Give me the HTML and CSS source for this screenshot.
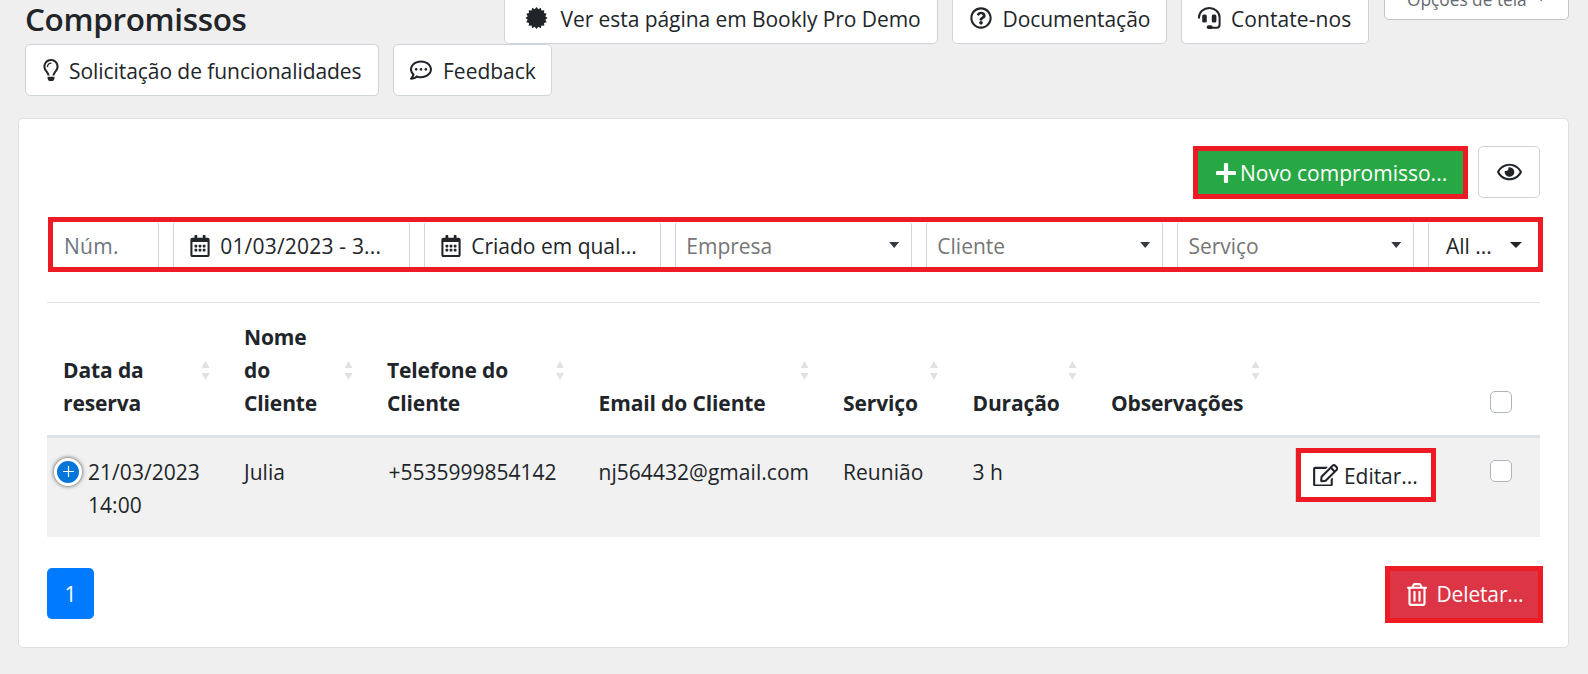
FILE: index.html
```html
<!DOCTYPE html>
<html lang="pt-BR">
<head>
<meta charset="utf-8">
<title>Compromissos</title>
<link rel="stylesheet" href="styles.css">
</head>
<body>
<svg class="sprite" aria-hidden="true">
  <symbol id="calendar" viewBox="0 0 448 512"><path d="M148 288h-40c-6.6 0-12-5.4-12-12v-40c0-6.600 5.400-12 12-12h40c6.600 0 12 5.400 12 12v40c0 6.600-5.400 12-12 12zm108-12v-40c0-6.600-5.400-12-12-12h-40c-6.600 0-12 5.400-12 12v40c0 6.600 5.400 12 12 12h40c6.600 0 12-5.400 12-12zm96 0v-40c0-6.600-5.400-12-12-12h-40c-6.600 0-12 5.400-12 12v40c0 6.600 5.400 12 12 12h40c6.600 0 12-5.400 12-12zm-96 96v-40c0-6.600-5.400-12-12-12h-40c-6.600 0-12 5.400-12 12v40c0 6.600 5.400 12 12 12h40c6.600 0 12-5.400 12-12zm-96 0v-40c0-6.600-5.400-12-12-12h-40c-6.600 0-12 5.400-12 12v40c0 6.600 5.400 12 12 12h40c6.600 0 12-5.400 12-12zm192 0v-40c0-6.600-5.400-12-12-12h-40c-6.600 0-12 5.400-12 12v40c0 6.600 5.400 12 12 12h40c6.600 0 12-5.400 12-12zm96-260v352c0 26.500-21.500 48-48 48H48c-26.500 0-48-21.500-48-48V112c0-26.500 21.500-48 48-48h48V12c0-6.600 5.400-12 12-12h40c6.600 0 12 5.400 12 12v52h128V12c0-6.600 5.400-12 12-12h40c6.600 0 12 5.400 12 12v52h48c26.500 0 48 21.500 48 48zm-48 346V160H48v298c0 3.300 2.700 6 6 6h340c3.300 0 6-2.700 6-6z"/></symbol>
</svg>

<header class="header">
  <div class="header-row header-top">
    <h1 class="title">Compromissos</h1>
    <a class="btn btn-demo"><svg class="icon" width="23" height="22" viewBox="0 0 22 22"><path d="M22 11L19.800 12.800 21.200 15.200 18.500 16 18.800 18.800 16 18.500 15.200 21.200 12.800 19.800 11 22 9.200 19.800 6.800 21.200 6 18.500 3.200 18.800 3.500 16 .8 15.200 2.200 12.800 0 11 2.200 9.200 .8 6.800 3.500 6 3.200 3.200 6 3.500 6.800 .8 9.200 2.200 11 0 12.800 2.200 15.200 .8 16 3.500 18.800 3.200 18.500 6 21.200 6.800 19.800 9.200z"/></svg><span>Ver esta página em Bookly Pro Demo</span></a>
    <a class="btn btn-docs"><svg class="icon" width="22" height="22" viewBox="0 0 512 512"><path d="M256 8C119.043 8 8 119.083 8 256c0 136.997 111.043 248 248 248s248-111.003 248-248C504 119.083 392.957 8 256 8zm0 448c-110.532 0-200-89.431-200-200 0-110.495 89.472-200 200-200 110.491 0 200 89.471 200 200 0 110.530-89.431 200-200 200zm107.244-255.200c0 67.052-72.421 68.084-72.421 92.863V300c0 6.627-5.373 12-12 12h-45.647c-6.627 0-12-5.373-12-12v-8.659c0-35.745 27.100-50.034 47.579-61.516 17.561-9.845 28.324-16.541 28.324-29.579 0-17.246-21.999-28.693-39.784-28.693-23.189 0-33.894 10.977-48.942 29.969-4.057 5.120-11.460 6.071-16.666 2.124l-27.824-21.098c-5.107-3.872-6.251-11.066-2.644-16.363C184.846 131.491 214.940 112 261.794 112c49.071 0 101.450 38.304 101.450 88.800zM298 368c0 23.159-18.841 42-42 42s-42-18.841-42-42 18.841-42 42-42 42 18.841 42 42z"/></svg><span>Documentação</span></a>
    <a class="btn btn-contact"><svg class="icon" width="23" height="22" viewBox="0 0 23 22"><path d="M1 11.500V10.500a10.300 9.500 0 0 1 20.600 0V17.500q0 3.200-3 3.200H12" fill="none" stroke="currentColor" stroke-width="2"/><rect x="4.200" y="7.500" width="4.600" height="8" rx="1.600"/><rect x="13.800" y="7.500" width="4.600" height="8" rx="1.600"/><rect x="8.700" y="18.300" width="6" height="3.700" rx="1.800"/></svg><span>Contate-nos</span></a>
    <button class="screen-options">Opções de tela <i class="caret caret-tiny"></i></button>
  </div>
  <div class="header-row">
    <a class="btn btn-request"><svg class="icon" width="16" height="22" viewBox="0 0 352 512"><path d="M176 80c-52.940 0-96 43.060-96 96 0 8.840 7.160 16 16 16s16-7.160 16-16c0-35.300 28.720-64 64-64 8.840 0 16-7.160 16-16s-7.160-16-16-16zM96.060 459.170c0 3.150.93 6.220 2.680 8.840l24.510 36.840c2.970 4.460 7.970 7.140 13.320 7.140h78.850c5.360 0 10.360-2.680 13.320-7.140l24.510-36.840c1.740-2.620 2.670-5.700 2.680-8.840l.05-43.180H96.020l.04 43.180zM176 0C73.720 0 0 82.970 0 176c0 44.370 16.450 84.850 43.560 115.780 16.640 18.990 42.740 58.800 52.420 92.160v.06h48v-.12c-.01-4.770-.72-9.510-2.150-14.070-5.590-17.810-22.820-64.770-62.170-109.670-20.540-23.430-31.520-53.150-31.610-84.140-.2-73.640 59.670-128 127.950-128 70.580 0 128 57.420 128 128 0 30.970-11.240 60.850-31.650 84.140-39.110 44.610-56.420 91.470-62.100 109.460a47.507 47.507 0 0 0-2.220 14.300v.1h48v-.05c9.680-33.370 35.780-73.180 52.420-92.160C335.550 260.850 352 220.370 352 176 352 78.800 273.200 0 176 0z"/></svg><span>Solicitação de funcionalidades</span></a>
    <a class="btn btn-feedback"><svg class="icon" width="22" height="22" viewBox="0 0 512 512"><path d="M144 208c-17.700 0-32 14.300-32 32s14.300 32 32 32 32-14.300 32-32-14.300-32-32-32zm112 0c-17.700 0-32 14.300-32 32s14.300 32 32 32 32-14.300 32-32-14.300-32-32-32zm112 0c-17.700 0-32 14.300-32 32s14.300 32 32 32 32-14.300 32-32-14.300-32-32-32zM256 32C114.600 32 0 125.100 0 240c0 47.600 19.900 91.200 52.900 126.300C38 405.700 7 439.100 6.500 439.500c-6.600 7-8.400 17.200-4.600 26S14.400 480 24 480c61.500 0 110-25.700 139.100-46.300C192 442.800 223.200 448 256 448c141.400 0 256-93.100 256-208S397.400 32 256 32zm0 368c-26.700 0-53.100-4.100-78.400-12.100l-22.700-7.200-19.500 13.800c-14.300 10.100-33.900 21.400-57.500 29 7.300-12.100 14.400-25.700 19.900-40.200l10.600-28.100-20.600-21.800C69.700 314.100 48 282.200 48 240c0-88.200 93.300-160 208-160s208 71.800 208 160-93.300 160-208 160z"/></svg><span>Feedback</span></a>
  </div>
</header>

<main class="card">
  <div class="toolbar">
    <button class="btn-new"><svg class="icon" width="20" height="20" viewBox="0 0 20 20"><path d="M7.900 1.200Q7.900 0 9.100 0h1.800q1.200 0 1.200 1.200v6.700h6.700q1.200 0 1.200 1.200v1.800q0 1.200-1.200 1.200h-6.700v6.700q0 1.200-1.200 1.200H9.100q-1.200 0-1.200-1.200v-6.700H1.200Q0 12.100 0 10.900V9.100q0-1.200 1.200-1.200h6.700z"/></svg><span>Novo compromisso...</span></button>
    <button class="btn-eye"><svg class="icon" width="25" height="22" viewBox="0 0 576 512"><path d="M288 144a110.940 110.940 0 0 0-31.240 5 55.400 55.400 0 0 1 7.240 27 56 56 0 0 1-56 56 55.400 55.400 0 0 1-27-7.240A111.710 111.710 0 1 0 288 144zm284.520 97.400C518.290 135.590 410.930 64 288 64S57.680 135.640 3.480 241.410a32.350 32.350 0 0 0 0 29.190C57.710 376.410 165.070 448 288 448s230.320-71.640 284.520-177.410a32.350 32.350 0 0 0 0-29.190zM288 400c-98.650 0-189.090-55-237.930-144C98.910 167 189.340 112 288 112s189.090 55 237.930 144C477.100 345 386.660 400 288 400z"/></svg></button>
  </div>

  <div class="filters">
    <div class="filter filter-id">Núm.</div>
    <div class="filter filter-date"><svg class="icon" width="20" height="22" preserveAspectRatio="none"><use href="#calendar"/></svg><span class="date-range">01/03/2023 - 3...</span></div>
    <div class="filter filter-date"><svg class="icon" width="20" height="22"><use href="#calendar"/></svg><span>Criado em qual...</span></div>
    <div class="filter filter-select">Empresa<i class="caret"></i></div>
    <div class="filter filter-select">Cliente<i class="caret"></i></div>
    <div class="filter filter-select">Serviço<i class="caret"></i></div>
    <div class="filter filter-all">All ...<i class="caret caret-wide"></i></div>
  </div>

  <div class="table">
    <div class="row head">
      <div class="cell">Data da<br>reserva<i class="sort"></i></div>
      <div class="cell">Nome<br>do<br>Cliente<i class="sort"></i></div>
      <div class="cell">Telefone do<br>Cliente<i class="sort"></i></div>
      <div class="cell">Email do Cliente<i class="sort"></i></div>
      <div class="cell">Serviço<i class="sort"></i></div>
      <div class="cell">Duração<i class="sort"></i></div>
      <div class="cell">Observações<i class="sort"></i></div>
      <div></div>
      <div class="check-cell"><span class="checkbox"></span></div>
    </div>
    <div class="row body">
      <div class="cell date-cell"><span class="expand"><svg width="11" height="11" viewBox="0 0 11 11"><path d="M5.500 0v11M0 5.500h11" stroke="#fff" stroke-width="1.200"/></svg></span><span>21/03/2023<br>14:00</span></div>
      <div class="cell">Julia</div>
      <div class="cell phone">+5535999854142</div>
      <div class="cell">nj564432@gmail.com</div>
      <div class="cell">Reunião</div>
      <div class="cell">3 h</div>
      <div class="cell"></div>
      <div class="edit-cell"><button class="btn-edit"><svg class="icon" width="25.500" height="22.500" viewBox="0 0 576 512"><path d="M402.300 344.900l32-32c5-5 13.700-1.500 13.700 5.700V464c0 26.500-21.500 48-48 48H48c-26.500 0-48-21.500-48-48V112c0-26.500 21.500-48 48-48h273.500c7.100 0 10.700 8.600 5.700 13.700l-32 32c-1.500 1.500-3.500 2.300-5.700 2.300H48v352h352V350.500c0-2.100.8-4.100 2.300-5.600zm156.600-201.800L296.300 405.700l-90.400 10c-26.200 2.900-48.500-19.200-45.600-45.600l10-90.400L432.900 17.100c22.900-22.900 59.900-22.900 82.700 0l43.200 43.200c22.900 22.900 22.900 60 .1 82.800zM460.100 174L402 115.900 216.200 301.800l-7.300 65.300 65.300-7.300L460.100 174zm64.800-79.700l-43.200-43.200c-4.100-4.100-10.800-4.100-14.800 0L436 82l58.100 58.100 30.900-30.900c4-4.200 4-10.800-.1-14.900z"/></svg><span>Editar...</span></button></div>
      <div class="check-cell"><span class="checkbox"></span></div>
    </div>
  </div>

  <div class="footer">
    <a class="page">1</a>
    <button class="btn-delete"><svg class="icon" width="20" height="23" viewBox="0 0 448 512"><path d="M268 416h24a12 12 0 0 0 12-12V188a12 12 0 0 0-12-12h-24a12 12 0 0 0-12 12v216a12 12 0 0 0 12 12zM432 80h-82.410l-34-56.700A48 48 0 0 0 274.410 0H173.590a48 48 0 0 0-41.160 23.300L98.410 80H16A16 16 0 0 0 0 96v16a16 16 0 0 0 16 16h16v336a48 48 0 0 0 48 48h288a48 48 0 0 0 48-48V128h16a16 16 0 0 0 16-16V96a16 16 0 0 0-16-16zM171.840 50.910A6 6 0 0 1 177 48h94a6 6 0 0 1 5.150 2.910L293.610 80H154.390zM368 464H80V128h288zm-212-48h24a12 12 0 0 0 12-12V188a12 12 0 0 0-12-12h-24a12 12 0 0 0-12 12v216a12 12 0 0 0 12 12z"/></svg><span>Deletar...</span></button>
  </div>
</main>
</body>
</html>
```
FILE: styles.css
```css
* { box-sizing: border-box; }

body {
  margin: 0;
  height: 674px;
  overflow: hidden;
  background: #efefef;
  color: #212529;
  font: 21px/33px "Open Sans", "Noto Sans", sans-serif;
  white-space: nowrap;
}

button { font: inherit; color: inherit; margin: 0; }
.sprite { position: absolute; width: 0; height: 0; }
.icon { display: block; flex: none; fill: currentColor; }

/* Page header */
.header { display: flow-root; padding-left: 25px; height: 118px; }
.header-row { display: flex; align-items: flex-start; gap: 14px; }
.header-top { margin-top: -8px; }

.title {
  width: 465px;
  margin: 6px 0 0;
  font-size: 31.500px;
  line-height: 42px;
  font-weight: 600;
  letter-spacing: -.35px;
}

.btn {
  display: flex;
  align-items: center;
  height: 52px;
  border: 1px solid #ced4da;
  border-radius: 5px;
  background: #fff;
}
.btn span, .btn-edit span { padding-top: 2px; }
.btn-demo { width: 434px; padding-left: 20px; gap: 12.500px; letter-spacing: -.06px; }
.btn-docs { width: 215px; padding-left: 17px; gap: 10.500px; letter-spacing: -.05px; }
.btn-contact { width: 188px; padding-left: 16px; gap: 10px; letter-spacing: .08px; }
.btn-request { width: 354px; padding-left: 17px; gap: 10px; letter-spacing: -.06px; }
.btn-feedback { width: 159px; padding-left: 16px; gap: 11px; }

.screen-options {
  display: flex;
  align-items: center;
  gap: 11px;
  width: 185px;
  height: 42px;
  margin: -14px 0 0 1px;
  padding: 0 0 0 22px;
  border: 1px solid #c3c4c7;
  border-radius: 0 0 5px 5px;
  background: #fff;
  color: #646970;
  font-size: 17.300px;
}

.caret {
  flex: none;
  width: 10px;
  height: 6px;
  background: #343a40;
  clip-path: polygon(0 0, 100% 0, 50% 100%);
}
.caret-wide { width: 12px; background: #212529; }
.caret-tiny { width: 7px; height: 5px; background: #646970; }

/* Card */
.card {
  width: 1551px;
  height: 530px;
  margin-left: 18px;
  padding: 27px 28px 0;
  border: 1px solid #dfdfdf;
  border-radius: 5px;
  background: #fff;
}

.toolbar { display: flex; justify-content: flex-end; gap: 10px; }
.btn-new {
  display: flex;
  align-items: center;
  gap: 4px;
  width: 275px;
  height: 53px;
  padding: 0 0 0 18px;
  border: 5px solid #ed1c24;
  background: #28a745;
  color: #fff;
}
.btn-new span { padding-top: 2px; }
.btn-eye {
  display: grid;
  place-items: center;
  width: 62px;
  height: 52px;
  border: 1px solid #ced4da;
  border-radius: 5px;
  background: #fff;
}

.filters {
  display: flex;
  gap: 13.700px;
  height: 55px;
  margin: 18px -3px 0 1px;
  border: 5px solid #ed1c24;
}
.filter {
  display: flex;
  align-items: center;
  flex: none;
  width: 237.360px;
  border: 1px solid #ced4da;
  border-width: 0 1px;
  border-radius: 3px 3px 0 0;
}
.filter-id {
  width: 106px;
  padding: 4px 0 0 11px;
  border-left: 0;
  color: #6c757d;
  letter-spacing: .3px;
}
.filter-date { padding: 3px 0 0 16px; gap: 10.500px; }
.date-range { letter-spacing: .2px; }
.filter-date .icon { margin-top: -1px; }
.filter-select {
  justify-content: space-between;
  padding: 3px 12px 0 10.500px;
  color: #757575;
}
.filter .caret { margin-top: -2px; }
.filter-all {
  width: 110px;
  justify-content: space-between;
  padding: 3px 16px 0 17px;
  border-right: 0;
}

/* Appointments table */
.table { margin-top: 30px; border-top: 1px solid #dee2e6; }
.row {
  display: grid;
  grid-template-columns: 181px 143px 211.500px 244.500px 129.500px 138.500px 183px 196px 66px;
}
.head { height: 135px; border-bottom: 3px solid #dee2e6; font-weight: 700; letter-spacing: -.12px; }
.cell { padding-left: 16px; }
.head .cell {
  display: grid;
  grid-template-columns: 1fr 8px;
  align-items: end;
  padding: 0 18.500px 15px 16px;
}
.sort {
  align-self: center;
  width: 8px;
  height: 19px;
  margin-top: 18px;
  background: #dfe1e2;
  clip-path: polygon(50% 0, 100% 7px, 100% 12px, 50% 100%, 0 12px, 100% 12px, 100% 7px, 0 7px);
}
.body { height: 99px; background: #f1f1f1; letter-spacing: .04px; }
.body .cell { padding-top: 18px; }
.body .date-cell { display: flex; align-items: flex-start; gap: 6px; padding-left: 7px; }
.body .phone { padding-left: 17.500px; letter-spacing: 0; }
.expand {
  display: grid;
  place-items: center;
  flex: none;
  width: 28px;
  height: 28px;
  margin-top: 2px;
  border: 3px solid #fff;
  border-radius: 50%;
  background: #0275d8;
  box-shadow: 0 0 4px #444;
}
.expand svg { margin-top: -2px; }
.edit-cell { padding: 10px 0 0 18px; }
.btn-edit {
  display: flex;
  align-items: center;
  gap: 6px;
  width: 140px;
  height: 54px;
  padding: 0 0 0 11.500px;
  border: 5px solid #ed1c24;
  background: #fff;
  letter-spacing: -.05px;
  box-shadow: -1px 0 #ced4da;
}
.check-cell { display: flex; padding-left: 16px; }
.checkbox {
  width: 22px;
  height: 22px;
  margin-top: 22px;
  border: 1px solid #adb5bd;
  border-radius: 5px;
  background: #fff;
}
.head .check-cell { align-items: flex-end; }
.head .checkbox { margin: 0 0 22px; }

/* Pagination and delete */
.footer { display: flex; justify-content: space-between; margin: 29px -3px 0 0; }
.page {
  width: 47px;
  height: 51px;
  margin-top: 2px;
  border-radius: 5px;
  background: #007bff;
  color: #fff;
  line-height: 53px;
  text-align: center;
}
.btn-delete {
  display: flex;
  align-items: center;
  gap: 9.500px;
  width: 158px;
  height: 57px;
  padding: 0 0 0 17px;
  border: 5px solid #ed1c24;
  background: #dc3545;
  color: #fff;
  letter-spacing: -.15px;
}
.btn-delete .icon { margin-top: -1px; }
```
